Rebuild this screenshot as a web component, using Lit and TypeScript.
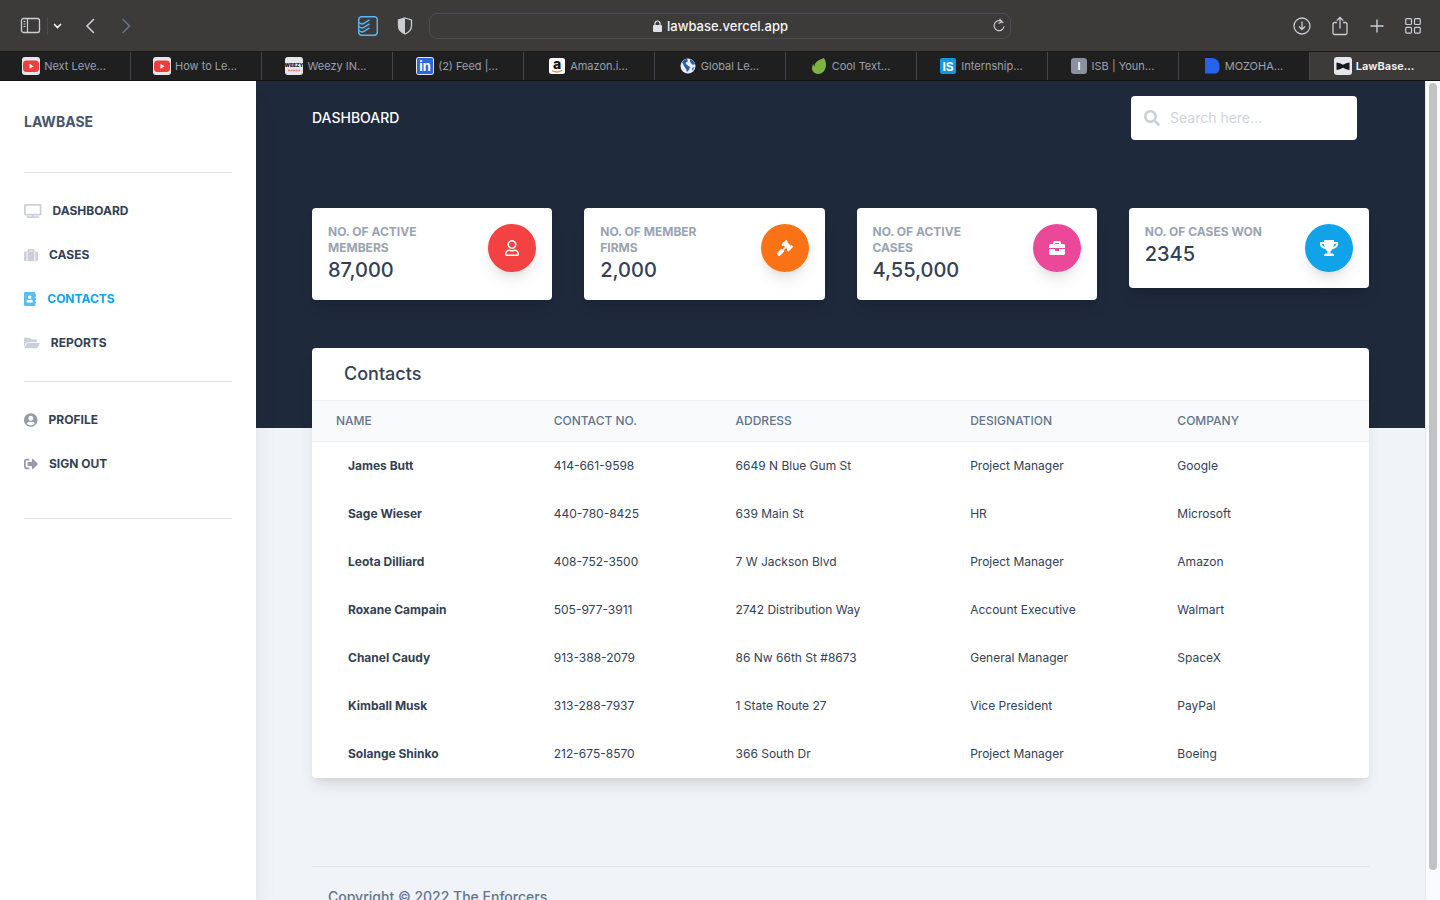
import { LitElement, html, svg, css, TemplateResult } from "lit";
import { customElement, property } from "lit/decorators.js";
import { classMap } from "lit/directives/class-map.js";

const SOLID: Record<string, { w: number; d: string }> = {
  tv: { w: 640, d: "M592 0H48A48 48 0 0 0 0 48v320a48 48 0 0 0 48 48h240v32H112a16 16 0 0 0-16 16v32a16 16 0 0 0 16 16h416a16 16 0 0 0 16-16v-32a16 16 0 0 0-16-16H352v-32h240a48 48 0 0 0 48-48V48a48 48 0 0 0-48-48zm-16 352H64V64h512z" },
  suitcase: { w: 512, d: "M128 480h256V80c0-26.5-21.5-48-48-48H176c-26.5 0-48 21.5-48 48v400zm64-384h128v32H192V96zm320 80v256c0 26.5-21.5 48-48 48h-48V128h48c26.5 0 48 21.5 48 48zM96 480H48c-26.5 0-48-21.5-48-48V176c0-26.5 21.5-48 48-48h48v352z" },
  book: { w: 448, d: "M436 160c6.6 0 12-5.4 12-12v-40c0-6.6-5.4-12-12-12h-20V48c0-26.5-21.5-48-48-48H48C21.5 0 0 21.5 0 48v416c0 26.5 21.5 48 48 48h320c26.5 0 48-21.5 48-48v-48h20c6.6 0 12-5.4 12-12v-40c0-6.6-5.4-12-12-12h-20v-64h20c6.6 0 12-5.4 12-12v-40c0-6.6-5.4-12-12-12h-20v-64h20zm-228-32c35.3 0 64 28.7 64 64s-28.7 64-64 64-64-28.7-64-64 28.7-64 64-64zm112 236.8c0 10.6-10 19.2-22.4 19.2H118.4C106 384 96 375.4 96 364.8v-19.2c0-31.8 30.1-57.6 67.2-57.6h5c12.3 5.1 25.7 8 39.8 8s27.6-2.9 39.8-8h5c37.1 0 67.2 25.8 67.2 57.6v19.2z" },
  folder: { w: 576, d: "M572.694 292.093L500.27 416.248A63.997 63.997 0 0 1 444.989 448H45.025c-18.523 0-30.064-20.093-20.731-36.093l72.424-124.155A64 64 0 0 1 152 256h399.964c18.523 0 30.064 20.093 20.73 36.093zM152 224h328v-48c0-26.51-21.49-48-48-48H272l-64-64H48C21.49 64 0 85.49 0 112v278.046l69.077-118.418C86.214 242.25 117.989 224 152 224z" },
  profile: { w: 496, d: "M248 8C111 8 0 119 0 256s111 248 248 248 248-111 248-248S385 8 248 8zm0 96c48.6 0 88 39.4 88 88s-39.4 88-88 88-88-39.4-88-88 39.4-88 88-88zm0 344c-58.7 0-111.3-26.6-146.5-68.2 18.8-35.4 55.6-59.8 98.5-59.8 2.4 0 4.8.4 7.1 1.1 13 4.2 26.6 6.9 40.9 6.9 14.3 0 28-2.7 40.9-6.9 2.3-.7 4.7-1.1 7.1-1.1 42.9 0 79.7 24.4 98.5 59.8C359.3 421.4 306.7 448 248 448z" },
  signout: { w: 512, d: "M497 273L329 441c-15 15-41 4.5-41-17v-96H152c-13.3 0-24-10.7-24-24v-96c0-13.3 10.7-24 24-24h136V88c0-21.4 25.9-32 41-17l168 168c9.3 9.4 9.3 24.6 0 34zM192 436v-40c0-6.6-5.4-12-12-12H96c-17.7 0-32-14.3-32-32V160c0-17.7 14.3-32 32-32h84c6.6 0 12-5.4 12-12V76c0-6.6-5.4-12-12-12H96c-53 0-96 43-96 96v192c0 53 43 96 96 96h84c6.6 0 12-5.4 12-12z" },
  search: { w: 512, d: "M505 442.7L405.3 343c-4.5-4.5-10.6-7-17-7H372c27.6-35.3 44-79.7 44-128C416 93.1 322.9 0 208 0S0 93.1 0 208s93.1 208 208 208c48.3 0 92.7-16.4 128-44v16.3c0 6.4 2.5 12.5 7 17l99.7 99.7c9.4 9.4 24.6 9.4 33.9 0l28.3-28.3c9.4-9.4 9.4-24.6.1-34zM208 336c-70.7 0-128-57.2-128-128 0-70.7 57.2-128 128-128 70.7 0 128 57.2 128 128 0 70.7-57.2 128-128 128z" },
  user: { w: 448, d: "M313.6 304c-28.7 0-42.5 16-89.6 16-47.1 0-60.8-16-89.6-16C60.2 304 0 364.2 0 438.4V464c0 26.5 21.5 48 48 48h352c26.5 0 48-21.5 48-48v-25.6c0-74.2-60.2-134.4-134.4-134.4zM400 464H48v-25.6c0-47.6 38.8-86.4 86.4-86.4 14.6 0 38.3 16 89.6 16 51.7 0 74.9-16 89.6-16 47.6 0 86.4 38.8 86.4 86.4V464zM224 288c79.5 0 144-64.5 144-144S303.5 0 224 0 80 64.5 80 144s64.5 144 144 144zm0-240c52.9 0 96 43.1 96 96s-43.1 96-96 96-96-43.1-96-96 43.1-96 96-96z" },
  gavel: { w: 512, d: "M504.971 199.362l-22.627-22.627c-9.373-9.373-24.569-9.373-33.941 0l-5.657 5.657L329.608 69.255l5.657-5.657c9.373-9.373 9.373-24.569 0-33.941L312.638 7.029c-9.373-9.373-24.569-9.373-33.941 0L154.246 131.48c-9.373 9.373-9.373 24.569 0 33.941l22.627 22.627c9.373 9.373 24.569 9.373 33.941 0l5.657-5.657 39.598 39.598-81.04 81.04-5.657-5.657c-12.497-12.497-32.758-12.497-45.255 0L9.373 412.118c-12.497 12.497-12.497 32.758 0 45.255l45.255 45.255c12.497 12.497 32.758 12.497 45.255 0l114.745-114.745c12.497-12.497 12.497-32.758 0-45.255l-5.657-5.657 81.04-81.04 39.598 39.598-5.657 5.657c-9.373 9.373-9.373 24.569 0 33.941l22.627 22.627c9.373 9.373 24.569 9.373 33.941 0l124.451-124.451c9.372-9.372 9.372-24.568 0-33.941z" },
  briefcase: { w: 512, d: "M320 336c0 8.84-7.16 16-16 16h-96c-8.84 0-16-7.16-16-16v-48H0v144c0 25.6 22.4 48 48 48h416c25.6 0 48-22.4 48-48V288H320v48zm144-208h-80V80c0-25.6-22.4-48-48-48H176c-25.6 0-48 22.4-48 48v48H48c-25.6 0-48 22.4-48 48v80h512v-80c0-25.6-22.4-48-48-48zm-144 0H192V96h128v32z" },
  trophy: { w: 576, d: "M552 64H448V24c0-13.3-10.7-24-24-24H152c-13.3 0-24 10.7-24 24v40H24C10.7 64 0 74.7 0 88v56c0 35.7 22.5 72.4 61.9 100.7 31.5 22.7 69.8 37.1 110 41.7C203.3 338.5 240 360 240 360v72h-48c-35.3 0-64 20.7-64 56v12c0 6.6 5.4 12 12 12h296c6.6 0 12-5.4 12-12v-12c0-35.3-28.7-56-64-56h-48v-72s36.7-21.5 68.1-73.6c40.3-4.6 78.6-19 110-41.7 39.3-28.3 61.9-65 61.9-100.7V88c0-13.3-10.7-24-24-24zM99.3 192.8C74.9 175.2 64 155.6 64 144v-16h64.2c1 32.6 5.8 61.2 12.8 86.2-15.1-5.2-29.2-12.4-41.7-21.4zM512 144c0 16.1-17.7 36.1-35.3 48.8-12.5 9-26.7 16.2-41.8 21.4 7-25 11.8-53.6 12.8-86.2H512v16z" },
};

const solid = (name: string) => {
  const icon = SOLID[name];
  return html`<svg class="solid" viewBox="0 0 ${icon.w} 512" aria-hidden="true"><path d=${icon.d}></path></svg>`;
};

const solidCss = css`
  .solid {
    display: block;
    height: 1em;
    width: auto;
    fill: currentColor;
  }
`;

const line = (w: number, h: number, body: TemplateResult | unknown) =>
  html`<svg class="line" width=${w} height=${h} viewBox="0 0 ${w} ${h}" aria-hidden="true">${body}</svg>`;

const FAVICONS: Record<string, unknown> = {
  youtube: svg`<rect width="18" height="18" rx="3" fill="#e5e7eb"/><rect x="1" y="3.500" width="16" height="11.500" rx="3.500" fill="#f03e3e"/><path d="M7.500 6.700v5l4-2.500z" fill="#fff"/>`,
  weezy: svg`<rect width="18" height="18" rx="3" fill="#e5e7eb"/><text x="9" y="10" text-anchor="middle" font-size="5" font-weight="900" fill="#26262b">WEEZY</text><path d="M3 13.500h12" stroke="#e08076" stroke-width="1.500" stroke-dasharray="2 .6"/>`,
  linkedin: svg`<rect width="18" height="18" rx="3" fill="#e5e7eb"/><rect x="1" y="1" width="16" height="16" rx="1.500" fill="#2867e0"/><text x="9" y="14" text-anchor="middle" font-size="13" font-weight="700" fill="#fff">in</text>`,
  amazon: svg`<rect x="1" y="1" width="16" height="16" rx="2.500" fill="#fff"/><text x="9" y="12" text-anchor="middle" font-size="14" font-weight="800" fill="#111">a</text><path d="M4 13.500q5 3 10 0" fill="none" stroke="#f08a4b" stroke-width="1.300"/>`,
  globe: svg`<circle cx="9" cy="9" r="7.500" fill="#e8eef8"/><path d="M3 5Q5 2 8 1.700L9 4 6.500 6 8 8l3 2-1 3-2 2-1-3-2-3zM11 2q4 1.500 5 5l-2 1-3-3zM13 11l2.500-1-2 4z" fill="#2c5cae"/>`,
  leaf: svg`<path d="M14 1Q17 6 15.500 11T9 17Q3 17 2 12q-.5-3 1.500-5 .3 2 1 2.500Q4 4 14 1z" fill="#7cb342"/>`,
  internshala: svg`<rect x="1" y="1" width="16" height="16" rx="2" fill="#1297e8"/><text x="9" y="13.500" text-anchor="middle" font-size="12" font-weight="700" fill="#fff">IS</text>`,
  isb: svg`<rect x="1" y="1" width="16" height="16" rx="3" fill="#8b919e"/><text x="9" y="13" text-anchor="middle" font-size="11" font-weight="600" fill="#fff">I</text>`,
  mozo: svg`<path d="M2 1h6.500Q16 1 16.500 9v3q-1 4-4 4.500H2z" fill="#2563eb"/>`,
  bow: svg`<rect width="18" height="18" rx="3" fill="#e5e7eb"/><path d="M2.500 5.500q3.500.5 6.500 2.300 3-1.800 6.500-2.300v7.500Q12 12.500 9 10.800 6 12.500 2.500 13z" fill="#17181b"/>`,
};

const TABS: [string, string][] = [
  ["youtube", "Next Leve..."],
  ["youtube", "How to Le..."],
  ["weezy", "Weezy IN..."],
  ["linkedin", "(2) Feed |..."],
  ["amazon", "Amazon.i..."],
  ["globe", "Global Le..."],
  ["leaf", "Cool Text..."],
  ["internshala", "Internship..."],
  ["isb", "ISB | Youn..."],
  ["mozo", "MOZOHA..."],
  ["bow", "LawBase..."],
];

@customElement("browser-chrome")
export class BrowserChrome extends LitElement {
  static styles = css`
    :host { display: block; background: #3d3b39; color: #c9cdd6; }
    .toolbar {
      display: grid;
      grid-template-columns: 1fr minmax(0, 582px) 1fr;
      align-items: center;
      height: 51px;
      border-bottom: 1px solid #1b1b1b;
    }
    .side { display: flex; align-items: center; }
    .left { padding: 0 14px 0 20px; }
    .right { justify-content: flex-end; gap: 18px; padding-right: 18px; }
    .line { display: block; fill: none; stroke: currentColor; }
    button {
      display: block;
      margin: 0;
      padding: 0;
      border: 0;
      background: none;
      color: inherit;
    }
    .split { width: 1px; height: 18px; margin: 0 4px 0 6px; background: #4c4b50; }
    .back { margin-left: 18px; }
    .forward { margin-left: 16px; color: #64728a; }
    .todo { margin-left: auto; color: #5bb5f0; }
    .shield { margin-left: 17px; }
    .address {
      display: flex;
      align-items: center;
      height: 26px;
      box-sizing: border-box;
      border: 1px solid #4b4b56;
      border-radius: 8px;
      padding: 0 3px 0 20px;
    }
    .url { flex: 1; display: flex; align-items: center; justify-content: center; gap: 5px; font-size: 13px; font-weight: 500; color: #f4f5f7; }
    .tabs { display: flex; height: 28px; background: #1f1f1f; border-bottom: 1px solid #111; }
    .tab {
      flex: 1;
      display: flex;
      align-items: center;
      justify-content: center;
      gap: 4px;
      min-width: 0;
      padding-right: 2px;
      font-size: 11px;
      color: #9aa0ad;
      text-decoration: none;
      white-space: nowrap;
      border-right: 1px solid #45454b;
    }
    .tab:last-child { border-right: 0; }
    .active { background: #3d3b39; color: #f4f5f7; font-weight: 600; }
    .icon { flex: none; display: block; }
  `;

  render() {
    return html`
      <div class="toolbar">
        <div class="side left">
          <button aria-label="Show sidebar">${line(21, 18, svg`<rect x="1.500" y="1.500" width="18" height="14" rx="2" stroke-width="1.300"/><path d="M7.500 1.500v14M3.500 4.500h2M3.500 7h2M3.500 9.500h2" stroke-width="1.200"/>`)}</button>
          <span class="split"></span>
          <button aria-label="Tab groups">${line(11, 10, svg`<path d="M2.500 3.500l3 3 3-3" stroke="#eef0f3" stroke-width="1.700" stroke-linecap="round"/>`)}</button>
          <button class="back" aria-label="Back">${line(19, 18, svg`<path d="M12.500 2.500L6 9l6.500 6.500" stroke-width="1.600" stroke-linecap="round"/>`)}</button>
          <button class="forward" aria-label="Forward">${line(19, 18, svg`<path d="M7 2.500L13.500 9 7 15.500" stroke-width="1.600" stroke-linecap="round"/>`)}</button>
          <button class="todo" aria-label="Todoist">${line(20, 20, svg`<rect x=".7" y=".7" width="18.600" height="18.600" rx="3" stroke-width="1.500"/><path d="M1 6.500q2.500 2 4 1.300l6.500-4M1 10.500q2.500 2 4 1.300l6.500-4M1 14.500q2.500 2 4 1.300l6.500-4" stroke-width="1.500"/>`)}</button>
          <button class="shield" aria-label="Privacy report">${line(20, 20, svg`<path d="M10 2l6.500 2v6q0 5-6.500 8-6.500-3-6.500-8V4z" stroke-width="1.300"/><path d="M10 2v16q-6.500-3-6.500-8V4z" fill="currentColor" stroke="none"/>`)}</button>
        </div>
        <div class="address">
          <span class="url">
            <svg width="9" height="12" viewBox="0 0 9 12" aria-hidden="true"><rect y="5" width="9" height="7" rx="1.300" fill="#dfe1e6"/><path d="M2 5.500V3.500a2.500 2.500 0 0 1 5 0v2" fill="none" stroke="#dfe1e6" stroke-width="1.200"/></svg>
            lawbase.vercel.app
          </span>
          <button aria-label="Reload">${line(16, 16, svg`<path d="M12.300 5A5 5 0 1 0 13 8.500M8.500.8l2.700 3L7.500 5.500" stroke-width="1.200"/>`)}</button>
        </div>
        <div class="side right">
          <button aria-label="Downloads">${line(20, 20, svg`<circle cx="10" cy="10" r="8" stroke-width="1.300"/><path d="M10 5.500v8M7 10.500l3 3 3-3" stroke-width="1.300"/>`)}</button>
          <button aria-label="Share">${line(20, 20, svg`<path d="M7 6.500H4.500a1.500 1.500 0 0 0-1.500 1.500v9a1.500 1.500 0 0 0 1.500 1.500h11A1.500 1.500 0 0 0 17 17V8a1.500 1.500 0 0 0-1.500-1.500H13M10 12.500V1.500M6.800 4.500L10 1.300l3.200 3.200" stroke-width="1.300"/>`)}</button>
          <button aria-label="New tab">${line(18, 20, svg`<path d="M9 3.500v13M2.500 10h13" stroke-width="1.400"/>`)}</button>
          <button aria-label="Tab overview">${line(18, 20, svg`<rect x="1.700" y="2.700" width="5.800" height="5.800" rx="1" stroke-width="1.200"/><rect x="10.500" y="2.700" width="5.800" height="5.800" rx="1" stroke-width="1.200"/><rect x="1.700" y="11.300" width="5.800" height="5.800" rx="1" stroke-width="1.200"/><rect x="10.500" y="11.300" width="5.800" height="5.800" rx="1" stroke-width="1.200"/>`)}</button>
        </div>
      </div>
      <nav class="tabs" aria-label="Tabs">
        ${TABS.map(
          ([icon, title], i) => html`<a href="#" class=${classMap({ tab: true, active: i === TABS.length - 1 })}>
            <svg class="icon" width="18" height="18" viewBox="0 0 18 18" aria-hidden="true">${FAVICONS[icon]}</svg>
            <span>${title}</span>
          </a>`
        )}
      </nav>
    `;
  }
}

@customElement("side-nav")
export class SideNav extends LitElement {
  static styles = [
    solidCss,
    css`
      :host { display: block; padding: 16px 24px; background: #fff; box-shadow: 0 20px 25px -5px rgba(0, 0, 0, 0.1), 0 10px 10px -5px rgba(0, 0, 0, 0.04); }
      .brand { display: block; padding: 16px 0; font-size: 14px; line-height: 18px; font-weight: 700; color: #475569; text-decoration: none; }
      hr { margin: 0; border: 0; border-top: 1px solid #dfe3e8; }
      .first { margin-top: 25px; }
      .last { margin-top: 16px; }
      ul { list-style: none; margin: 0; padding: 16px 0; }
      .link { display: flex; align-items: center; gap: 11px; padding: 12px 0; font-size: 12px; line-height: 20px; font-weight: 700; color: #334155; text-decoration: none; }
      .icon { font-size: 14px; color: #cbd0d8; }
      .dim { color: #959ba8; }
      .current, .current .icon { color: #0ea5e9; }
      .current .icon { opacity: 0.7; }
    `,
  ];

  private link(icon: string, label: string, extra = {}) {
    const dim = icon === "profile" || icon === "signout";
    return html`<li>
      <a href="#" class=${classMap({ link: true, ...extra })}>
        <span class=${classMap({ icon: true, dim })}>${solid(icon)}</span>${label}
      </a>
    </li>`;
  }

  render() {
    return html`
      <a class="brand" href="#">LAWBASE</a>
      <hr class="first" />
      <ul>
        ${this.link("tv", "DASHBOARD")} ${this.link("suitcase", "CASES")}
        ${this.link("book", "CONTACTS", { current: true })} ${this.link("folder", "REPORTS")}
      </ul>
      <hr />
      <ul>
        ${this.link("profile", "PROFILE")} ${this.link("signout", "SIGN OUT")}
      </ul>
      <hr class="last" />
    `;
  }
}

@customElement("stat-card")
export class StatCard extends LitElement {
  @property() label = "";
  @property() value = "";
  @property() icon = "";
  @property() tone = "";

  static styles = [
    solidCss,
    css`
      :host { display: block; }
      .card {
        display: flex;
        gap: 16px;
        padding: 16px;
        border-radius: 4px;
        background: #fff;
        box-shadow: 0 10px 15px -3px rgba(0, 0, 0, 0.1), 0 4px 6px -2px rgba(0, 0, 0, 0.05);
      }
      .text { flex: 1; min-width: 0; padding-right: 16px; }
      .label { margin: 0; font-size: 12px; line-height: 16px; font-weight: 700; color: #9aa3b2; }
      .value { margin: 0; font-size: 20px; line-height: 28px; font-weight: 500; color: #334155; }
      .badge {
        display: grid;
        place-items: center;
        flex: none;
        width: 48px;
        height: 48px;
        border-radius: 50%;
        font-size: 16px;
        color: #fff;
        box-shadow: 0 10px 15px -3px rgba(0, 0, 0, 0.1), 0 4px 6px -2px rgba(0, 0, 0, 0.05);
      }
      .red { background: #f44242; }
      .orange { background: #f97316; }
      .pink { background: #ec4899; }
      .blue { background: #10a3ea; }
    `,
  ];

  render() {
    return html`<section class="card">
      <div class="text">
        <h2 class="label">${this.label}</h2>
        <p class="value">${this.value}</p>
      </div>
      <span class=${classMap({ badge: true, [this.tone]: true })}>${solid(this.icon)}</span>
    </section>`;
  }
}

const CONTACTS = [
  ["James Butt", "414-661-9598", "6649 N Blue Gum St", "Project Manager", "Google"],
  ["Sage Wieser", "440-780-8425", "639 Main St", "HR", "Microsoft"],
  ["Leota Dilliard", "408-752-3500", "7 W Jackson Blvd", "Project Manager", "Amazon"],
  ["Roxane Campain", "505-977-3911", "2742 Distribution Way", "Account Executive", "Walmart"],
  ["Chanel Caudy", "913-388-2079", "86 Nw 66th St #8673", "General Manager", "SpaceX"],
  ["Kimball Musk", "313-288-7937", "1 State Route 27", "Vice President", "PayPal"],
  ["Solange Shinko", "212-675-8570", "366 South Dr", "Project Manager", "Boeing"],
];

@customElement("contacts-table")
export class ContactsTable extends LitElement {
  static styles = css`
    :host {
      display: block;
      overflow: hidden;
      border-radius: 4px;
      background: #fff;
      box-shadow: 0 10px 15px -3px rgba(0, 0, 0, 0.1), 0 4px 6px -2px rgba(0, 0, 0, 0.05);
    }
    .title { margin: 0; padding: 12px 32px; font-size: 18px; line-height: 28px; font-weight: 500; color: #334155; }
    table { width: 100%; border-collapse: separate; border-spacing: 0; table-layout: fixed; font-size: 12px; line-height: 16px; }
    .name { width: 20.6%; }
    .phone { width: 17.2%; }
    .address { width: 22.2%; }
    .role { width: 19.6%; }
    th { text-align: left; }
    .head th {
      padding: 12px 24px;
      font-weight: 500;
      color: #64748b;
      background: #f8fafc;
      border-top: 1px solid #edf0f4;
      border-bottom: 1px solid #edf0f4;
    }
    .row th, .row td { padding: 16px 24px; color: #334155; }
    .row th { padding-left: 36px; font-weight: 700; }
  `;

  render() {
    return html`
      <h3 class="title">Contacts</h3>
      <table>
        <colgroup>
          <col class="name" /><col class="phone" /><col class="address" /><col class="role" /><col />
        </colgroup>
        <thead>
          <tr class="head">
            ${["NAME", "CONTACT NO.", "ADDRESS", "DESIGNATION", "COMPANY"].map((h) => html`<th scope="col">${h}</th>`)}
          </tr>
        </thead>
        <tbody>
          ${CONTACTS.map(
            ([name, ...rest]) => html`<tr class="row">
              <th scope="row">${name}</th>
              ${rest.map((cell) => html`<td>${cell}</td>`)}
            </tr>`
          )}
        </tbody>
      </table>
    `;
  }
}

@customElement("app-root")
export class AppRoot extends LitElement {
  static styles = [
    solidCss,
    css`
      :host {
        display: flex;
        flex-direction: column;
        height: 100vh;
        overflow: hidden;
        font-family: Inter, "Open Sans", sans-serif;
      }
      browser-chrome { flex: none; }
      .page { flex: 1; display: flex; min-height: 0; }
      side-nav { flex: none; width: 208px; z-index: 1; }
      .main { flex: 1; min-width: 0; overflow: hidden; background: #f0f3f8; }
      .hero { padding: 15px 56px 128px; background: #1e293b; }
      .top { display: flex; align-items: center; justify-content: space-between; padding-right: 12px; margin-bottom: 68px; }
      .heading { margin: 0; font-size: 14px; line-height: 20px; font-weight: 500; color: #fff; }
      .search {
        display: flex;
        align-items: center;
        gap: 10px;
        width: 226px;
        height: 44px;
        box-sizing: border-box;
        padding: 0 12px 0 13px;
        border-radius: 4px;
        background: #fff;
        color: #cbd0d8;
        font-size: 16px;
      }
      .search input {
        flex: 1;
        min-width: 0;
        border: 0;
        padding: 0;
        outline: 0;
        background: none;
        font: 14px/20px Inter, "Open Sans", sans-serif;
        color: #475569;
      }
      .search input::placeholder { color: #cdd4de; opacity: 1; }
      .stats { display: grid; grid-template-columns: repeat(4, 1fr); align-items: start; gap: 32px; }
      .content { padding: 0 56px; margin-top: -80px; }
      footer { margin-top: 88px; border-top: 1px solid #e0e4ea; padding: 20px 16px; font-size: 14px; line-height: 20px; font-weight: 500; color: #64748b; }
      .scroll { flex: none; display: flex; flex-direction: column; width: 8px; padding: 2px 3px; border-left: 1px solid #e4e6ea; background: #fafbfc; }
      .thumb { flex: 28; border-radius: 4px; background: #c1c2c4; }
      .rest { flex: 1; }
    `,
  ];

  render() {
    return html`
      <browser-chrome></browser-chrome>
      <div class="page">
        <side-nav></side-nav>
        <main class="main">
          <div class="hero">
            <div class="top">
              <h1 class="heading">DASHBOARD</h1>
              <label class="search">${solid("search")}<input type="text" placeholder="Search here..." aria-label="Search" /></label>
            </div>
            <div class="stats">
              <stat-card label="NO. OF ACTIVE MEMBERS" value="87,000" icon="user" tone="red"></stat-card>
              <stat-card label="NO. OF MEMBER FIRMS" value="2,000" icon="gavel" tone="orange"></stat-card>
              <stat-card label="NO. OF ACTIVE CASES" value="4,55,000" icon="briefcase" tone="pink"></stat-card>
              <stat-card label="NO. OF CASES WON" value="2345" icon="trophy" tone="blue"></stat-card>
            </div>
          </div>
          <div class="content">
            <contacts-table></contacts-table>
            <footer>Copyright © 2022 The Enforcers</footer>
          </div>
        </main>
        <div class="scroll"><div class="thumb"></div><div class="rest"></div></div>
      </div>
    `;
  }
}
